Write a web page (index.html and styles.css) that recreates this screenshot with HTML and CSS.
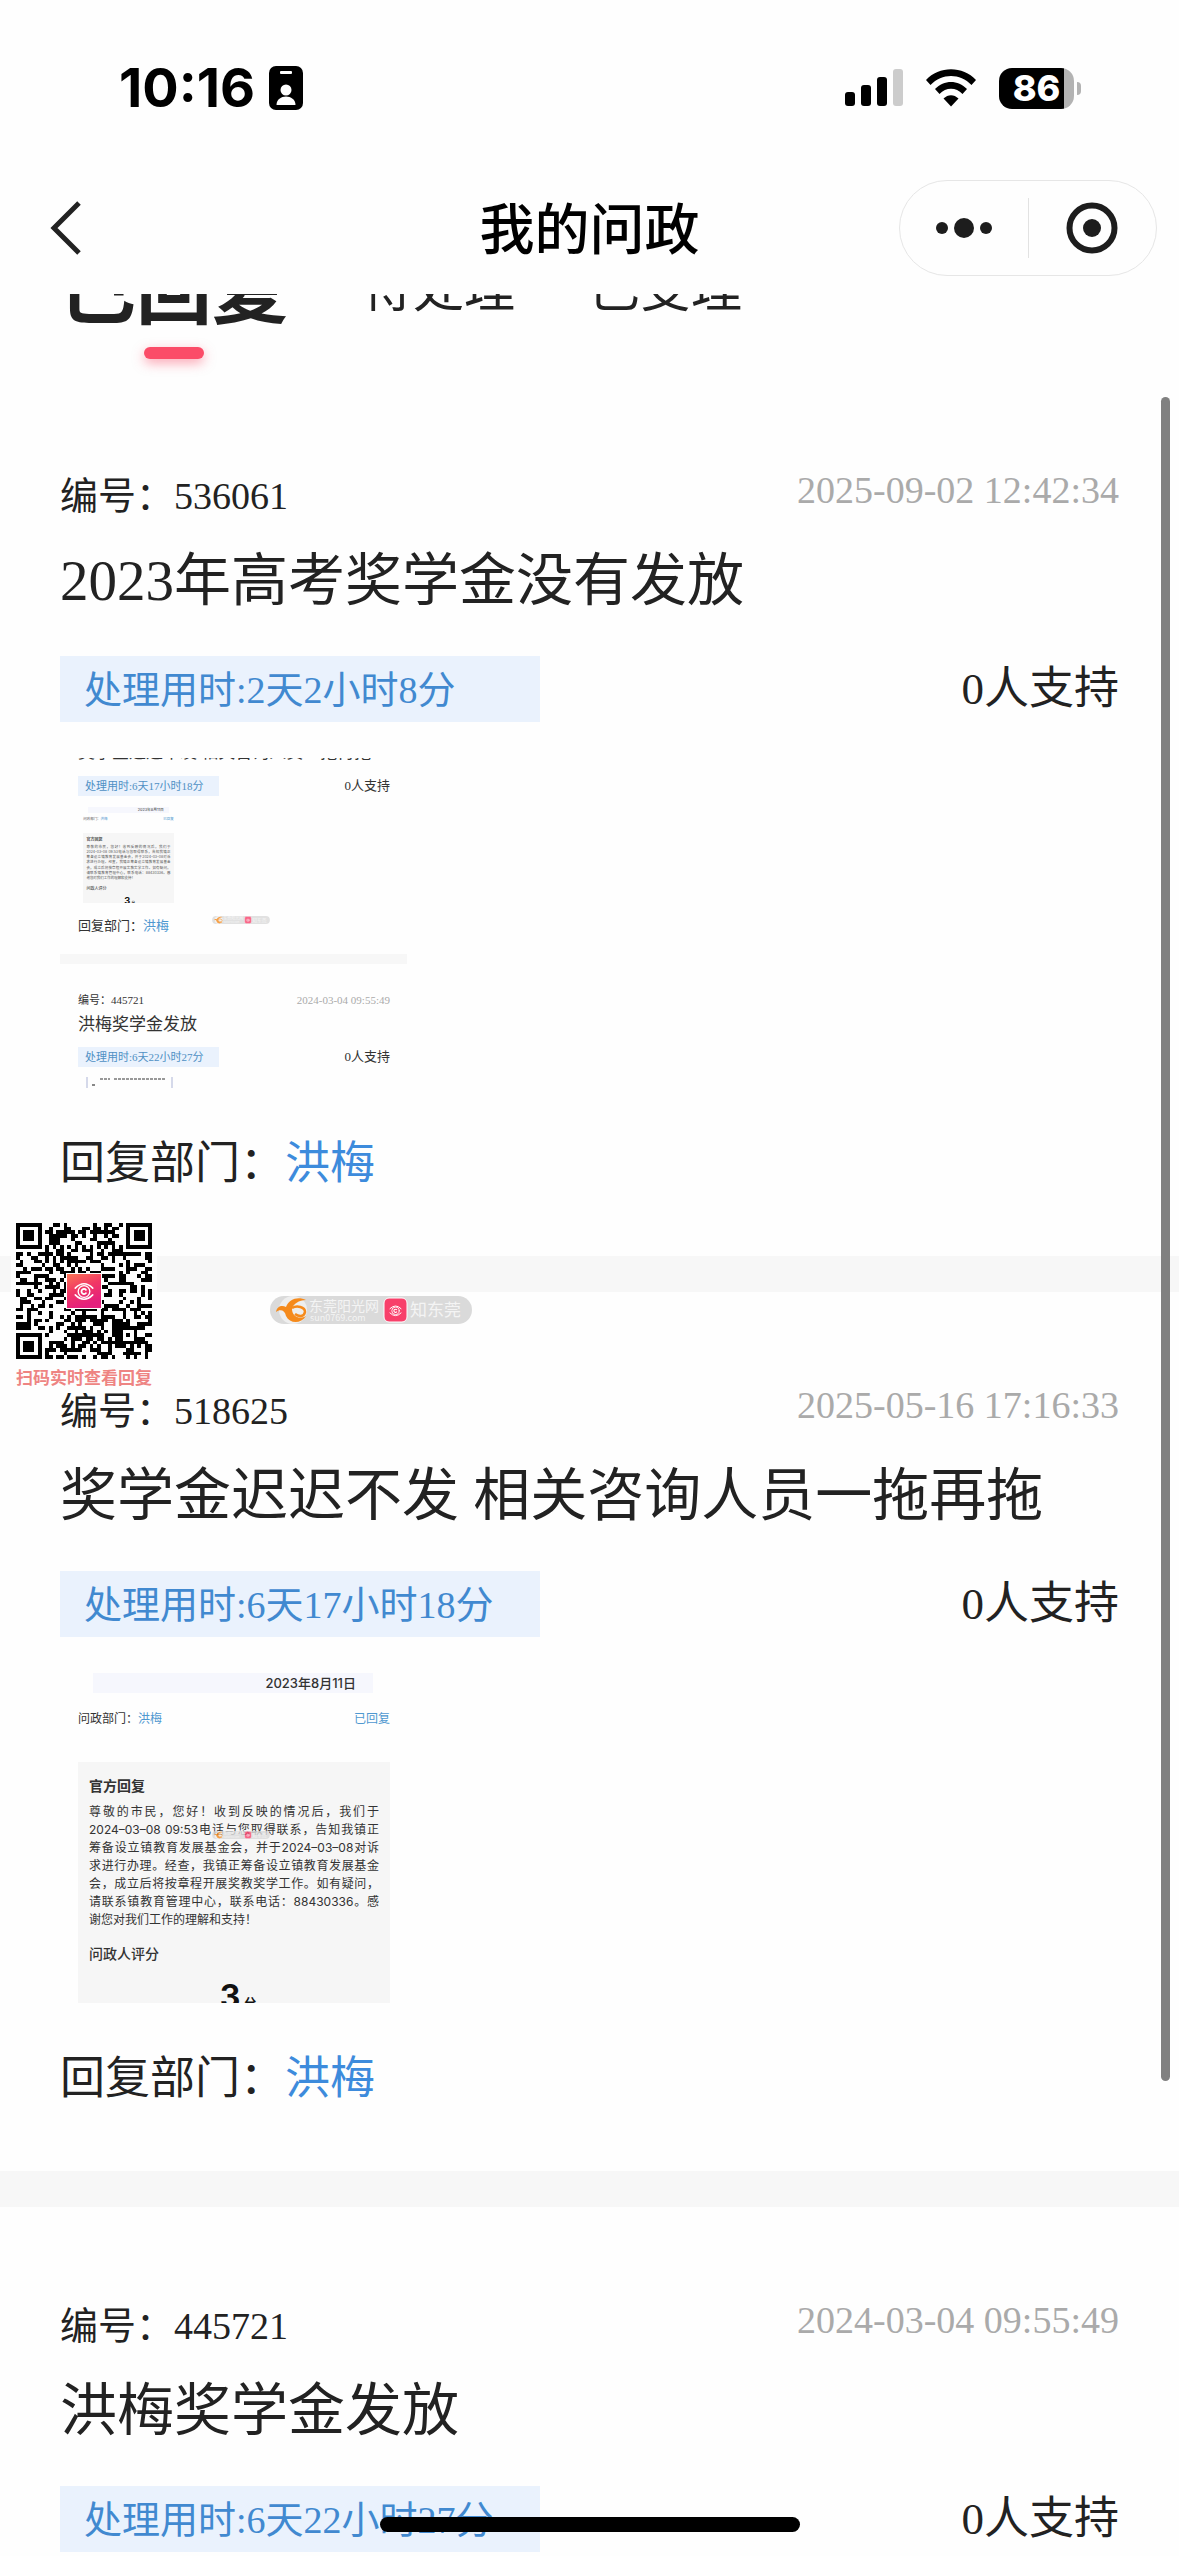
FILE: index.html
```html
<!DOCTYPE html>
<html lang="zh-CN">
<head>
    <meta charset="UTF-8">
    <meta name="viewport" content="width=device-width, initial-scale=1.0">
    <title>我的问政</title>
    <link rel="stylesheet" href="styles.css">
</head>
<body>
    <!-- shared logo shapes -->
    <svg class="defs" width="0" height="0" aria-hidden="true">
        <defs>
            <linearGradient id="pinkGradient" x1="0" y1="0" x2="0.4" y2="1">
                <stop offset="0" stop-color="#fb7355"/>
                <stop offset="0.5" stop-color="#f13765"/>
                <stop offset="1" stop-color="#e41f7d"/>
            </linearGradient>
            <symbol id="eye" viewBox="0 0 34 34">
                <g fill="none" stroke="#fff" stroke-linecap="round">
                    <path d="M8 14 Q17 5 26 14" stroke-width="1.600"/>
                    <path d="M8 21 Q17 30 26 21" stroke-width="1.600"/>
                    <circle cx="17" cy="17.500" r="6" stroke-width="1.400"/>
                    <path d="M19 15.800 A2.600 2.600 0 1 0 19 19.200" stroke-width="1.800"/>
                </g>
            </symbol>
            <symbol id="brand" viewBox="0 0 202 28">
                <rect x="0" y="0" width="202" height="28" rx="14" fill="#dadada"/>
                <circle cx="23" cy="14" r="14" fill="#eee"/>
                <path d="M6 16 C7 10 12 9 16 11 C19 3 28 0 36 4 C29 4 23 8 22 13 C22 20 29 24 36 20 C31 28 20 28 16 20 C15 14 10 13 6 16 Z" fill="#f58a1c"/>
                <path d="M22 12 C27 9 35 11 35 16 C34 21 29 21 25 18" fill="none" stroke="#f58a1c" stroke-width="2.500"/>
                <text x="39" y="15" class="brand-text" font-size="14">东莞阳光网</text>
                <text x="40" y="25" class="brand-text" font-size="9">sun0769.com</text>
                <rect x="114" y="2" width="23" height="24" rx="5" fill="#f8406a" stroke="#fff"/>
                <use href="#eye" x="115" y="4" width="21" height="21"/>
                <text x="140" y="20" class="brand-text" font-size="17">知东莞</text>
            </symbol>
        </defs>
    </svg>

    <header class="header">
        <div class="status-bar">
            <div class="status-left">
                <span class="time">10:16</span>
                <svg width="34" height="44" viewBox="0 0 34 44">
                    <rect width="34" height="44" rx="7"/>
                    <rect x="11" y="5" width="12" height="3" rx="1" fill="#fff"/>
                    <circle cx="17" cy="24" r="5.500" fill="#fff"/>
                    <path d="M7.500 39 C7.500 27.500 26.500 27.500 26.500 39 Z" fill="#fff"/>
                </svg>
            </div>
            <div class="status-right">
                <svg width="58" height="38" viewBox="0 0 58 38">
                    <rect x="0" y="23" width="10" height="14" rx="3"/>
                    <rect x="16" y="16" width="10" height="21" rx="3"/>
                    <rect x="32" y="8" width="10" height="29" rx="3"/>
                    <rect x="48" y="0" width="10" height="37" rx="3" fill="#ccc"/>
                </svg>
                <svg width="50" height="38" viewBox="0 0 50 38">
                    <path d="M0 11 C13 -3.500 37 -3.500 50 11 L45.500 16 C34 4 16 4 4.500 16 Z"/>
                    <path d="M9 20 C18 10.500 32 10.500 41 20 L36.500 25 C30 18 20 18 13.500 25 Z"/>
                    <path d="M17.500 29.500 C22 25 28 25 32.500 29.500 L25 37.500 Z"/>
                </svg>
                <div class="battery"><span>86</span></div>
            </div>
        </div>
        <div class="nav-bar">
            <button class="back" aria-label="返回">
                <svg width="32" height="54" viewBox="0 0 32 54">
                    <path d="M29 2 L4 27 L29 52" fill="none" stroke="#222" stroke-width="5"/>
                </svg>
            </button>
            <h1>我的问政</h1>
            <div class="capsule">
                <button aria-label="更多">
                    <svg width="56" height="20" viewBox="0 0 56 20">
                        <circle cx="6" cy="10" r="6" fill="#1d1d1d"/>
                        <circle cx="28" cy="10" r="10" fill="#1d1d1d"/>
                        <circle cx="50" cy="10" r="6" fill="#1d1d1d"/>
                    </svg>
                </button>
                <button aria-label="关闭">
                    <svg width="52" height="52" viewBox="0 0 52 52">
                        <circle cx="26" cy="26" r="22.500" fill="none" stroke="#1d1d1d" stroke-width="6"/>
                        <circle cx="26" cy="26" r="9" fill="#1d1d1d"/>
                    </svg>
                </button>
            </div>
        </div>
    </header>

    <main>
        <nav class="tabs">
            <button class="tab active">已回复</button>
            <button class="tab">待处理</button>
            <button class="tab">已受理</button>
        </nav>

        <article class="card">
            <div class="meta">
                <span>编号：536061</span>
                <time>2025-09-02 12:42:34</time>
            </div>
            <h2>2023年高考奖学金没有发放</h2>
            <div class="info">
                <span class="duration">处理用时:2天2小时8分</span>
                <span>0人支持</span>
            </div>
            <div class="shot shot-list">
                <div class="cut-title"><span>奖学金迟迟不发 相关咨询人员一拖再拖</span></div>
                <div class="info">
                    <span class="duration">处理用时:6天17小时18分</span>
                    <span>0人支持</span>
                </div>
                <div class="shot shot-reply mini">
                    <div class="date-band">2023年8月11日</div>
                    <div class="dept">
                        <span>问政部门：<a href="#">洪梅</a></span>
                        <a href="#">已回复</a>
                    </div>
                    <div class="official">
                        <h3>官方回复</h3>
                        <p>尊敬的市民，您好！收到反映的情况后，我们于<br>2024–03–08 09:53电话与您取得联系，告知我镇正<br>筹备设立镇教育发展基金会，并于2024–03–08对诉<br>求进行办理。经查，我镇正筹备设立镇教育发展基金<br>会，成立后将按章程开展奖教奖学工作。如有疑问，<br>请联系镇教育管理中心，联系电话：88430336。感</p>
                        <p class="last">谢您对我们工作的理解和支持！</p>
                        <h4>问政人评分</h4>
                        <div class="score">3<small>分</small></div>
                    </div>
                </div>
                <div class="reply">回复部门：<a href="#">洪梅</a></div>
                <div class="line"></div>
                <div class="meta">
                    <span>编号：445721</span>
                    <time>2024-03-04 09:55:49</time>
                </div>
                <h3>洪梅奖学金发放</h3>
                <div class="info">
                    <span class="duration">处理用时:6天22小时27分</span>
                    <span>0人支持</span>
                </div>
                <svg class="strip" width="88" height="12" viewBox="0 0 88 12">
                    <path d="M1 0 V12 M86 0 V12" stroke="#d5d9ea" stroke-width="2"/>
                    <path d="M14 2 H24 M28 2 H80" stroke="#999" stroke-width="2" stroke-dasharray="3 1"/>
                    <path d="M6 8 H9" stroke="#888" stroke-width="2"/>
                </svg>
                <svg class="brand-small" width="58" height="8"><use href="#brand"/></svg>
            </div>
            <div class="reply">回复部门：<a href="#">洪梅</a></div>
        </article>

        <article class="card">
            <div class="meta">
                <span>编号：518625</span>
                <time>2025-05-16 17:16:33</time>
            </div>
            <h2>奖学金迟迟不发 相关咨询人员一拖再拖</h2>
            <div class="info">
                <span class="duration">处理用时:6天17小时18分</span>
                <span>0人支持</span>
            </div>
            <div class="shot shot-reply">
                <div class="date-band">2023年8月11日</div>
                <div class="dept">
                    <span>问政部门：<a href="#">洪梅</a></span>
                    <a href="#">已回复</a>
                </div>
                <div class="official">
                    <h3>官方回复</h3>
                    <p>尊敬的市民，您好！收到反映的情况后，我们于<br>2024–03–08 09:53电话与您取得联系，告知我镇正<br>筹备设立镇教育发展基金会，并于2024–03–08对诉<br>求进行办理。经查，我镇正筹备设立镇教育发展基金<br>会，成立后将按章程开展奖教奖学工作。如有疑问，<br>请联系镇教育管理中心，联系电话：88430336。感</p>
                    <p class="last">谢您对我们工作的理解和支持！</p>
                    <h4>问政人评分</h4>
                    <div class="score">3<small>分</small></div>
                </div>
                <svg class="brand-small" width="58" height="8"><use href="#brand"/></svg>
            </div>
            <div class="reply">回复部门：<a href="#">洪梅</a></div>
        </article>

        <article class="card">
            <div class="meta">
                <span>编号：445721</span>
                <time>2024-03-04 09:55:49</time>
            </div>
            <h2>洪梅奖学金发放</h2>
            <div class="info">
                <span class="duration">处理用时:6天22小时27分</span>
                <span>0人支持</span>
            </div>
        </article>
    </main>

    <!-- floating watermark, scroll thumb and home indicator -->
    <div class="qr-box">
        <svg id="qr" width="136" height="136" viewBox="0 0 37 37" shape-rendering="crispEdges">
            <path id="qrModules" fill="#000"/>
            <rect x="13.500" y="13.500" width="10" height="10" fill="#fff"/>
            <rect x="14" y="14" width="9" height="9" fill="url(#pinkGradient)"/>
            <use href="#eye" x="14" y="14" width="9" height="9" shape-rendering="auto"/>
        </svg>
        <p>扫码实时查看回复</p>
    </div>
    <svg class="brand-large" width="202" height="28"><use href="#brand"/></svg>
    <div class="scroll-thumb"></div>
    <div class="home-indicator"></div>

    <script src="script.js"></script>
</body>
</html>
```
FILE: styles.css
```css
* {
    box-sizing: border-box;
}

body {
    margin: 0;
    height: 100vh;
    overflow: hidden;
    position: relative;
    background: #fefefe;
    color: #222;
    font-family: "Liberation Serif", "Noto Sans CJK SC", serif;
}

h1, h2, h3, h4, p {
    margin: 0;
    font-weight: 400;
}

button {
    padding: 0;
    border: none;
    background: none;
    color: inherit;
    font: inherit;
    cursor: pointer;
}

a {
    color: #3d8bdc;
    text-decoration: none;
}

svg {
    display: block;
    flex-shrink: 0;
}

.defs {
    position: absolute;
}

/* header */
.header {
    position: relative;
    z-index: 2;
    height: 294px;
    background: #fefefe;
}

.status-bar {
    display: flex;
    justify-content: space-between;
    align-items: center;
    height: 176px;
    padding: 0 105px 0 119px;
    font-family: Inter, "Liberation Sans", sans-serif;
    color: #000;
}

.status-left,
.status-right {
    display: flex;
    align-items: center;
    gap: 14px;
}

.status-right {
    gap: 23px;
}

.time {
    font-size: 54px;
    font-weight: 700;
    line-height: 60px;
}

.battery {
    position: relative;
    width: 75px;
    height: 41px;
    border-radius: 13px;
    background: linear-gradient(to right, #000 65px, #b3b3b3 65px);
    color: #fff;
    font-size: 36px;
    font-weight: 800;
    line-height: 41px;
    text-align: center;
}

.battery::after {
    content: "";
    position: absolute;
    right: -7px;
    top: 14px;
    width: 4px;
    height: 13px;
    border-radius: 0 4px 4px 0;
    background: #b3b3b3;
}

.nav-bar {
    display: grid;
    grid-template-columns: 1fr auto 1fr;
    align-items: center;
    height: 104px;
    padding: 0 22px;
}

.back {
    justify-self: start;
    margin-left: 28px;
}

.nav-bar h1 {
    padding-bottom: 6px;
    color: #000;
    font-family: "Noto Sans CJK SC", sans-serif;
    font-size: 55px;
    font-weight: 500;
    line-height: 80px;
}

.capsule {
    justify-self: end;
    display: flex;
    align-items: center;
    width: 258px;
    height: 96px;
    border: 1px solid #e6e6e6;
    border-radius: 48px;
}

.capsule button {
    flex: 1;
    display: flex;
    justify-content: center;
    align-items: center;
    height: 60px;
}

.capsule button + button {
    border-left: 1px solid #e2e2e2;
}

/* tabs, scrolled half way under the header */
.tabs {
    display: flex;
    align-items: center;
    gap: 74px;
    height: 142px;
    margin-top: -59px;
    padding: 0 60px 42px;
    font-family: "Noto Sans CJK SC", sans-serif;
}

.tab {
    position: relative;
    font-size: 51px;
    line-height: 100px;
}

.tab.active {
    font-size: 76px;
    font-weight: 700;
}

.tab.active::after {
    content: "";
    position: absolute;
    left: 50%;
    bottom: -24px;
    width: 60px;
    height: 12px;
    margin-left: -30px;
    border-radius: 6px;
    background: #fb4c68;
    box-shadow: 0 4px 12px rgba(251, 76, 104, 0.5);
}

/* cards */
.card {
    padding: 89px 60px 59px;
    border-bottom: 36px solid #f7f7f7;
}

.meta,
.info {
    display: flex;
    justify-content: space-between;
}

.card > .meta {
    font-size: 38px;
    line-height: 60px;
}

.meta time {
    color: #aaa;
}

.card > .meta time {
    line-height: 48px;
}

.card h2 {
    margin-top: 15px;
    font-size: 57px;
    line-height: 80px;
}

.info {
    align-items: center;
}

.card > .info {
    margin-top: 35px;
    font-size: 45px;
    line-height: 66px;
}

.duration {
    background: #eaf2fd;
    color: #4189d0;
}

.card > .info .duration {
    width: 480px;
    padding: 2px 0 0 24px;
    font-size: 38px;
    line-height: 64px;
}

.card > .reply {
    margin-top: 43px;
    font-size: 45px;
    line-height: 66px;
}

/* picture attachments */
.shot {
    position: relative;
    width: 347px;
    height: 330px;
    margin-top: 36px;
    overflow: hidden;
    color: #333;
}

.shot a {
    color: #4f98d0;
}

.shot-list {
    padding: 0 17px 0 18px;
    font-size: 13px;
    line-height: 20px;
}

.cut-title {
    display: flex;
    align-items: flex-end;
    height: 5px;
    margin-bottom: 13px;
    font-size: 17px;
    white-space: nowrap;
}

.shot-list .duration {
    width: 141px;
    padding-left: 7px;
    color: #4f90c4;
    font-size: 11px;
}

.shot-list .mini {
    zoom: 0.29;
    margin-top: 38px;
    color: #555;
}

.shot-list .reply {
    margin: 13px 0 18px;
}

.shot-list .line {
    height: 10px;
    margin: 0 -17px 26px -18px;
    background: #f7f7f7;
}

.shot-list .meta {
    font-size: 11px;
}

.shot-list > h3 {
    margin: 3px 0 10px;
    font-size: 17px;
    line-height: 24px;
}

.strip {
    margin: 10px 0 0 8px;
}

.shot-reply {
    padding: 0 17px 0 18px;
    font-family: Inter, "Noto Sans CJK SC", sans-serif;
    font-size: 12px;
    line-height: 20px;
}

.date-band {
    margin: 0 17px 0 15px;
    padding-right: 17px;
    background: #f6f7fd;
    font-size: 13px;
    font-weight: 500;
    text-align: right;
}

.dept {
    display: flex;
    justify-content: space-between;
    margin: 16px 0 33px;
}

.official {
    height: 260px;
    padding: 14px 11px;
    background: #f6f6f6;
}

.official h3 {
    margin-bottom: 7px;
    font-size: 14px;
    font-weight: 700;
}

.official p {
    line-height: 18px;
    text-align: justify;
    text-align-last: justify;
    white-space: nowrap;
}

.official .last {
    text-align-last: left;
}

.official h4 {
    margin: 15px 0;
    font-size: 14px;
    font-weight: 500;
}

.score {
    padding-left: 8px;
    color: #111;
    font-size: 32px;
    font-weight: 700;
    line-height: 36px;
    text-align: center;
}

.score small {
    margin-left: 4px;
    font-size: 12px;
}

.brand-small {
    position: absolute;
    left: 152px;
    top: 158px;
    opacity: 0.8;
}

.brand-text {
    fill: #f4f4f4;
    font-family: "Noto Sans CJK SC", sans-serif;
}

/* floating layer */
.qr-box {
    position: absolute;
    left: 11px;
    top: 1218px;
    width: 146px;
    padding: 5px;
    background: #fefefe;
}

.qr-box p {
    height: 29px;
    color: #ee8482;
    font-family: "Noto Sans CJK SC", sans-serif;
    font-size: 17px;
    font-weight: 700;
    line-height: 36px;
    text-align: center;
    white-space: nowrap;
}

.brand-large {
    position: absolute;
    left: 270px;
    top: 1296px;
}

.scroll-thumb {
    position: absolute;
    right: 9px;
    top: 397px;
    width: 9px;
    height: 1684px;
    border-radius: 5px;
    background: #808080;
}

.home-indicator {
    position: absolute;
    left: 50%;
    bottom: 24px;
    width: 420px;
    height: 15px;
    margin-left: -210px;
    border-radius: 8px;
    background: #000;
}
```
FILE: script.js
```js
// fills the code with finder squares, timing lines and data modules
const size = 37;
let seed = 769;

function nextBit() {
    seed = (seed * 1103515245 + 12345) % 2147483648;
    return (seed >> 16) & 1;
}

function ring(x, y, cx, cy) {
    return Math.max(Math.abs(x - cx), Math.abs(y - cy));
}

let d = '';
for (let y = 0; y < size; y++) {
    for (let x = 0; x < size; x++) {
        let dark = nextBit();
        const r = Math.min(ring(x, y, 3, 3), ring(x, y, 33, 3), ring(x, y, 3, 33));
        const a = ring(x, y, 30, 30);
        if (r <= 4) {
            dark = r !== 2 && r !== 4;
        } else if (a <= 2) {
            dark = a !== 1;
        } else if (x === 6) {
            dark = y % 2 === 0;
        } else if (y === 6) {
            dark = x % 2 === 0;
        }
        if (dark) {
            d += `M${x} ${y}h1v1h-1z`;
        }
    }
}
document.getElementById('qrModules').setAttribute('d', d);
```
